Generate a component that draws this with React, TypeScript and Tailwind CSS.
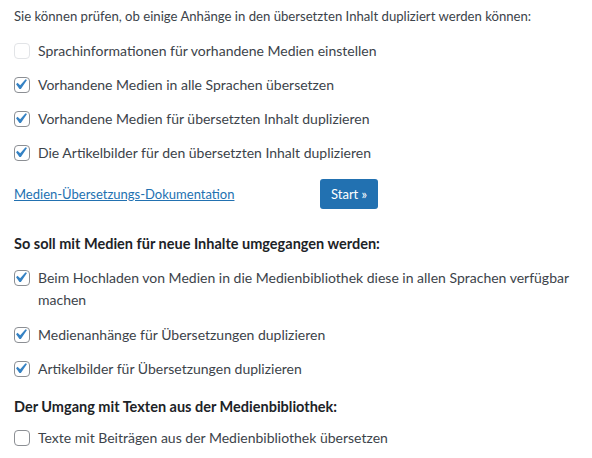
import React from "react";

function Box({ checked, disabled }: { checked?: boolean; disabled?: boolean }) {
  return (
    <span
      className={
        "relative inline-block w-4 h-4 shrink-0 rounded-[4px] border bg-white " +
        (disabled ? "border-[#e2e4e7]" : "border-[#8c8f94]")
      }
    >
      {checked && (
        <svg viewBox="0 0 20 20" className="absolute -left-[5px] -top-[4px] w-[21px] h-[21px]">
          <path d="M14.83 4.89l1.34.94-5.81 8.38H9.02L5.78 9.67l1.34-1.25 2.57 2.4z" fill="#3582c4" />
        </svg>
      )}
    </span>
  );
}

function Row({ checked, disabled, children }: { checked?: boolean; disabled?: boolean; children: React.ReactNode }) {
  return (
    <div className="flex items-center gap-[8px] h-[34px]">
      <Box checked={checked} disabled={disabled} />
      <span>{children}</span>
    </div>
  );
}

export default function App() {
  return (
    <div
      className="w-[592px] h-[458px] bg-white px-[14px] text-[14px] leading-[20px] text-[#3c434a]"
      style={{ fontFamily: '"Lato", sans-serif' }}
    >
      <p className="pt-[6px] h-[34px] text-[13.15px]">
        Sie können prüfen, ob einige Anhänge in den übersetzten Inhalt dupliziert werden können:
      </p>
      <Row disabled>Sprachinformationen für vorhandene Medien einstellen</Row>
      <Row checked>Vorhandene Medien in alle Sprachen übersetzen</Row>
      <Row checked>Vorhandene Medien für übersetzten Inhalt duplizieren</Row>
      <Row checked>Die Artikelbilder für den übersetzten Inhalt duplizieren</Row>
      <div className="flex items-center mt-[9px] h-[30px] text-[13px]">
        <a className="text-[#2271b1] underline w-[306px]">Medien-Übersetzungs-Dokumentation</a>
        <button className="h-[30px] px-[11px] rounded-[3px] bg-[#2271b1] text-white">Start »</button>
      </div>
      <p className="mt-[25px] font-bold text-[#1d2327] text-[14.5px]">
        So soll mit Medien für neue Inhalte umgegangen werden:
      </p>
      <div className="flex items-start gap-[8px] mt-[13px] leading-[22px]">
        <span className="mt-[3px]">
          <Box checked />
        </span>
        <span>
          Beim Hochladen von Medien in die Medienbibliothek diese in allen Sprachen verfügbar machen
        </span>
      </div>
      <div className="mt-[7px]">
        <Row checked>Medienanhänge für Übersetzungen duplizieren</Row>
        <Row checked>Artikelbilder für Übersetzungen duplizieren</Row>
      </div>
      <p className="mt-[11px] font-bold text-[#1d2327] text-[14.5px]">
        Der Umgang mit Texten aus der Medienbibliothek:
      </p>
      <div className="mt-[4px]">
        <Row>Texte mit Beiträgen aus der Medienbibliothek übersetzen</Row>
      </div>
    </div>
  );
}
